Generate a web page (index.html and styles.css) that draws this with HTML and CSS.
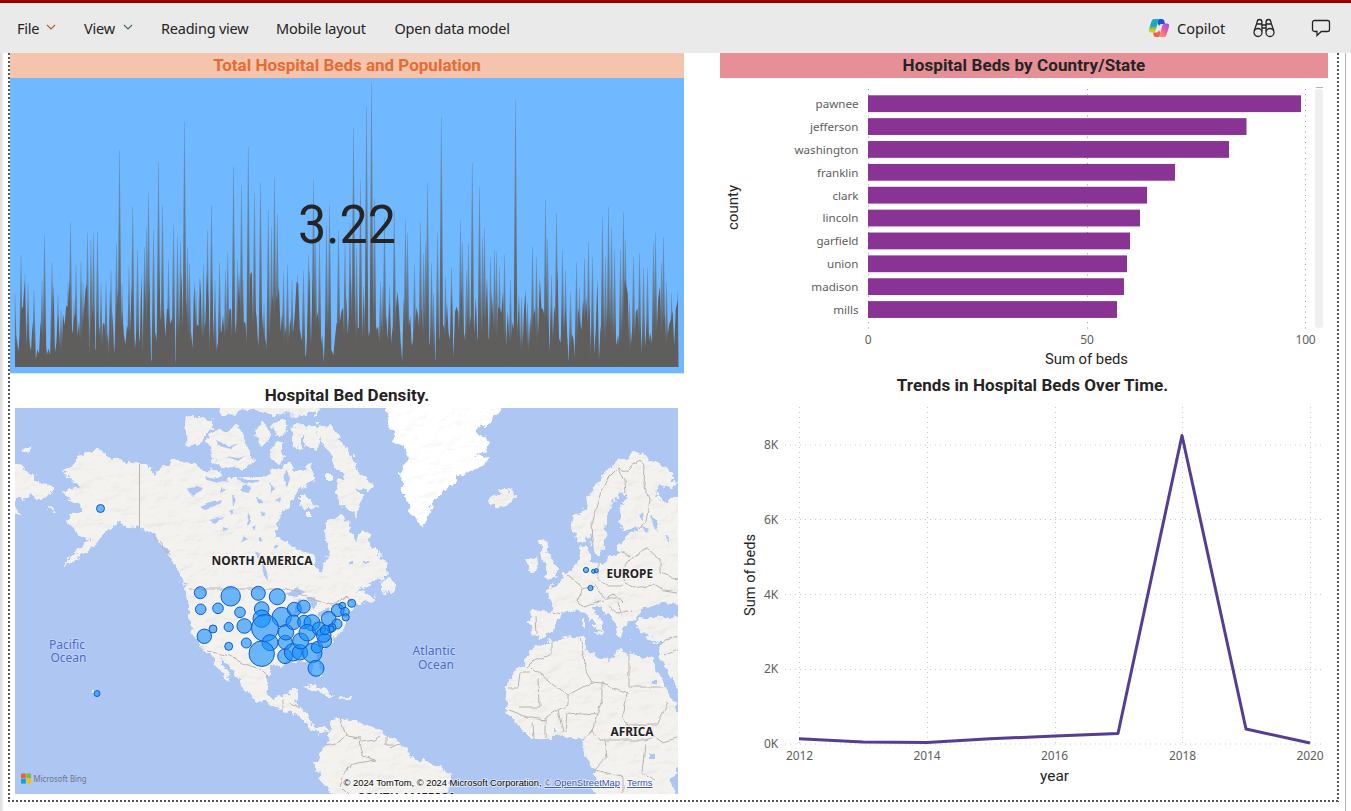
FILE: index.html
```html
<!DOCTYPE html>
<html lang="en">
<head>
<meta charset="utf-8">
<title>Hospital Beds Report</title>
<link rel="stylesheet" href="styles.css">
</head>
<body>
<header class="toolbar">
  <nav class="menu">
    <a class="item file">File <svg class="chev warm" viewBox="0 0 10 6"><path d="M1 1l4 4 4-4"/></svg></a>
    <a class="item view">View <svg class="chev" viewBox="0 0 10 6"><path d="M1 1l4 4 4-4"/></svg></a>
    <a class="item reading">Reading view</a>
    <a class="item mobile">Mobile layout</a>
    <a class="item model">Open data model</a>
  </nav>
  <div class="actions">
    <svg class="copilot" viewBox="0 0 22 20">
      <defs>
        <linearGradient id="cpA" x1="0" y1="0" x2="0" y2="1"><stop offset="0" stop-color="#19a5ec"/><stop offset=".5" stop-color="#22a9a0"/><stop offset=".8" stop-color="#b9cf36"/><stop offset="1" stop-color="#f5bd1f"/></linearGradient>
        <linearGradient id="cpB" x1=".8" y1="0" x2=".2" y2="1"><stop offset="0" stop-color="#9a55f2"/><stop offset=".45" stop-color="#ec5aa0"/><stop offset="1" stop-color="#ff9a52"/></linearGradient>
      </defs>
      <path fill="#1b52d8" d="M8 1h6c1.500 0 2 1 2.400 2.300L17 6h-3.500c-1.500 0-2 1-2.500 2z"/>
      <path fill="url(#cpA)" d="M6 1h6C10.500 1.500 10 4 9.300 6.500L7.800 12c-.5 1.600-1.200 2.500-2.800 2.500H3C.8 14.500.5 12.800 1.200 10.500L3.400 3.600C4 2 4.700 1 6 1z"/>
      <path fill="#f0644f" d="M14 19H8c-1.600 0-2.200-1-2.500-2.300L5 14.500h3.500c1.500 0 2-1 2.500-2.500z"/>
      <path fill="url(#cpB)" d="M16 19h-6c1.500-.5 2-3 2.700-5.500L14.200 8c.5-1.600 1.200-2.500 2.800-2.500h2c2.200 0 2.500 1.700 1.800 4l-2.200 6.900C18 18 17.300 19 16 19z"/>
    </svg>
    <span class="copilot-label">Copilot</span>
    <svg class="binoculars" viewBox="0 0 22 20"><g><circle cx="5" cy="14.500" r="4"/><circle cx="17" cy="14.500" r="4"/><path d="M1.200 13L4.200 4M8.900 13.500V4M13.100 13.500V4M20.800 13l-3-9M4.200 4c0-1.700.8-2.500 2.300-2.500S8.900 2.300 8.900 4M13.100 4c0-1.700.9-2.500 2.400-2.500s2.300.8 2.300 2.500M3.700 6h5M13.300 6h5M8.900 7h4.200M8.900 10h4.200"/></g></svg>
    <svg class="comment" viewBox="0 0 20 18"><path d="M3.500 1.500h13a2 2 0 0 1 2 2v7a2 2 0 0 1-2 2h-6.200L6 16.500v-4H3.500a2 2 0 0 1-2-2v-7a2 2 0 0 1 2-2z"/></svg>
  </div>
</header>
<main class="stage">
 <div class="report">
  <section class="column">
    <h2 class="title peach"><span class="t1">Total Hospital Beds and Population</span></h2>
    <div class="kpi">
      <svg class="fill" viewBox="10 78 674 296"><defs><linearGradient id="fade" x1="0" y1="0" x2="0" y2="1"><stop offset="0" stop-color="#5f5e5c" stop-opacity=".35"/><stop offset=".55" stop-color="#5f5e5c" stop-opacity=".8"/><stop offset=".8" stop-color="#5f5e5c"/></linearGradient></defs><g id="spikes"></g><text class="kpi-value" x="347" y="243" text-anchor="middle" textLength="98" lengthAdjust="spacingAndGlyphs">3.22</text></svg>
    </div>
    <h2 class="title plain"><span class="t2">Hospital Bed Density.</span></h2>
    <svg class="map" viewBox="15 408 663 386">
      <defs>
        <filter id="coast" x="-5%" y="-5%" width="110%" height="110%">
          <feTurbulence type="fractalNoise" baseFrequency=".13" numOctaves="3" seed="4" result="n"/>
          <feDisplacementMap in="SourceGraphic" in2="n" scale="10" xChannelSelector="R" yChannelSelector="G" result="land"/>
          <feTurbulence type="fractalNoise" baseFrequency=".05 .09" numOctaves="4" seed="9" result="h"/>
          <feDiffuseLighting in="h" surfaceScale="1" diffuseConstant="1.085" lighting-color="#fff" result="lit"><feDistantLight azimuth="225" elevation="68"/></feDiffuseLighting>
          <feComposite in="lit" in2="land" operator="in" result="shade"/>
          <feBlend in="land" in2="shade" mode="multiply"/>
        </filter>
        <filter id="rough"><feTurbulence type="fractalNoise" baseFrequency=".1" numOctaves="2" seed="4"/><feDisplacementMap in="SourceGraphic" scale="5" xChannelSelector="R" yChannelSelector="G"/></filter>
      </defs>
      <rect class="sea" x="15" y="408" width="663" height="386"/>
      <g class="land" filter="url(#coast)">
        <path d="M94 450L108 456 126 462 139 464 150 469 155 477 158 470 172 462 178 458 184 463 197 463 205 472 215 470 225 478 237 478 250 477 262 478 272 472 283 466 291 462 293 470 301 470 312 466 314 478 305 485 298 490 293 500 285 508 279 515 276 525 276 536 285 543 293 547 305 552 314 556 318 572 322 575 324 562 330 553 327 543 326 530 327 518 340 516 347 522 350 530 356 540 362 532 368 535 372 545 380 555 389 566 388 575 378 580 365 586 352 592 360 590 365 597 376 597 362 604 356 606 349 614 346 622 340 632 334 640 326 646 320 652 316 656 320 668 322 677 316 676 311 664 305 662 296 660 285 663 278 664 270 668 267 677 267 693 272 697 283 699 290 690 298 690 296 700 297 705 309 710 308 720 315 727 323 726 330 730 322 733 312 729 303 720 296 714 282 709 268 703 252 698 244 690 237 678 228 664 219 655 223 667 232 682 228 680 219 668 212 657 207 651 200 646 195 636 190 628 188 615 188 600 186 588 177 567 170 556 163 545 153 534 140 528 128 525 118 523 107 530 98 542 88 550 75 560 62 567 84 545 92 535 88 538 80 535 73 528 65 520 72 513 80 508 78 503 68 499 61 493 70 488 81 490 78 484 70 477 64 472 72 466 80 455z"/>
        <path d="M10 460L25 470 35 478 43 482 53 490 46 498 38 500 30 494 22 500 10 500zM10 500L22 514 10 516zM20 449l10-1 1 3-8 1zM48 508l6 1 3 3-7-2z"/>
        <path d="M187 417L197 416 210 420 213 428 202 438 196 447 187 443 186 430zM206 440L215 432 230 430 240 425 243 438 255 463 250 468 224 467 210 460 212 450zM255 428L262 422 268 428 270 440 262 447 256 440zM273 422L286 420 288 430 280 437 274 432zM273 445L280 442 283 460 277 463 271 458zM291 428L300 424 305 430 300 448 293 445zM305 426L317 424 319 440 315 450 304 445zM216 404L320 404 318 415 275 414 250 410 222 416z"/>
        <path d="M318 428L328 425 336 434 346 448 352 455 356 470 372 485 368 492 357 486 347 480 338 470 330 450 320 440zM338 480L350 478 356 487 362 497 358 516 350 510 340 503 336 492zM300 494L305 496 317 507 310 508 300 508zM327 474h6v7h-6zM306 512h5v4h-5zM383 580L390 577 396 588 393 594 382 591z"/>
        <path d="M489 496L501 492 513 490 515 498 508 505 496 508 491 503zM540 541L548 543 546 551 553 561 559 571 556 577 543 579 548 572 545 565 543 556zM527 562L537 557 538 567 532 573 527 571z"/>
        <path d="M572 517L585 508 590 497 597 485 605 473 615 463 628 455 642 452 648 460 660 465 672 473 677 483 672 490 658 485 655 490 663 502 670 500 684 490 684 603 672 604 662 602 654 606 646 606 640 612 636 619 628 620 623 628 620 638 614 620 605 612 597 604 591 608 597 616 605 624 602 632 596 626 590 618 583 612 575 610 563 612 557 620 553 632 541 638 532 635 530 624 532 610 551 612 553 604 548 594 545 590 557 582 567 573 577 565 580 558 582 545 588 552 590 563 605 562 619 555 618 548 628 535 640 531 637 528 623 530 619 520 622 507 628 497 623 492 616 498 608 510 607 522 604 540 602 552 597 556 592 545 590 535 583 541 575 537 570 525z"/>
        <path d="M636 621L642 619 658 616 684 618 684 700 678 693 664 664 659 655 661 640 645 637 638 629zM531 650L538 646 548 642 565 638 585 636 586 650 600 658 610 660 618 650 632 654 650 657 655 663 663 682 671 698 677 712 684 712 684 760 676 768 672 780 676 800 597 800 593 785 595 770 583 752 584 742 573 738 562 733 550 738 534 740 520 728 508 715 506 700 507 685 514 672 525 663z"/>
        <path d="M330 722L340 718 352 720 375 728 385 735 401 744 412 757 435 765 450 773 452 782 442 800 334 800 325 785 316 770 316 762 325 745 332 730zM302 686L312 684 325 690 336 696 328 696 315 689zM338 696L352 696 350 700 340 699zM582 619h3v8h-3zM594 632l8-1-2 4zM627 641h8v1h-8zM652 642l6-2-2 3zM92 689l3 2-2 1z"/>
        <path class="ice" d="M385 400L391 425 394 440 404 446 408 460 401 470 402 487 408 505 415 520 425 528 428 517 432 503 440 494 452 486 460 475 478 468 488 459 474 455 488 452 484 435 474 430 490 422 499 412 504 400z"/>
      </g>
      <g class="lakes" filter="url(#rough)">
        <path d="M187 489l10-4 7 2-4 5-8 5zM200 506l12-5 10-1-7 6-10 3zM209 520l14-3-8 6zM232 494l4 6-3 6zM248 512l3 8-4 8zM240 490l6-5 6 3-5 5zM262 560l5 12 1 8-5-7zM255 550l5 4-2 5zM285 594l12-6 10 4-10 4zM297 600l4-1-1 14-5 3zM306 598l8-2 4 8-4 5zM316 613l14-5-2 5-10 3zM331 607l10-4-2 4zM348 562h5v3h-5zM363 561h6v2h-6zM270 482l5 6-3 4zM243 535l4 4-5 4zM651 514l5 7 2 10-5-5zM664 535l5 2-1 6zM638 516l4-4 1 8zM590 534l4 6-3 2zM652 681h6v3h-6zM649 753h6v6h-6zM554 727h2v5h-2zM641 525l8 4-3 4z"/>
        <path d="M204 475l9 3 9-2 7 6-10 1-12-3zM238 478l10 2 12 0-5 4-14-1zM286 470l4 8-3 10-3-8zM222 487l5 3-6 3zM229 512l6-3-3 6zM256 498l7 2-5 3zM252 526l5-2-3 6zM262 512l4 3-5 2zM259 536l4 4-4 3zM217 440l12 6 10-1-8 4-12-3zM225 456l14 2 8-3-9 6zM275 500l7-3-4 6zM222 528l6 2-6 2zM274 545l4 2-4 2z"/>
      </g>
      <g class="borders" filter="url(#rough)">
        <path d="M153 535L170 555M189 589H288L315 600 333 605 347 596 354 605M207 651l23 5 12 7 16 5 10 8M283 700v10M290 704l10 4"/>
        <path d="M593 548L592 520 600 495 608 478 618 468 628 472 632 465 640 460 645 466 644 485 650 500 646 520 639 529M618 468L625 480 626 492M618 552l14 5 8-4 8-4M632 557l-10 14 3 12 9 4M648 549l12 10 0 14 18 6M598 563v17l10 5 14 0M567 575l16 14-6 12M583 589l12-3 10 12 12 0M605 598l10-4 8 9M595 603l8-3M617 602l6 16M609 606l9 8 14-3M536 616l1 18M552 612l10 2M577 601l8 5 10-4M634 587l20-3 10 6 14 2"/>
        <path d="M552 642V653L532 662 526 668M532 668L545 678 568 695 592 682 585 670 584 653 580 637M507 688H518L520 673H530M538 678L539 707H518M568 695V705L558 710 543 720M592 682L602 683V698L597 715 567 713 565 733M602 683L627 693 623 718 628 725H657L668 703M629 655V687H663M597 715L592 730 583 740M592 730L600 740H645L655 737M532 722L533 740M546 720V738M558 710L563 733M605 740L607 757 595 770M645 745L642 773 655 780M595 770L622 777V794M655 737L662 742 678 738M509 710l22 8 15 2M661 642L678 636M665 655L678 650"/>
        <path d="M340 718l6 18 14 2 2 18 14 4M362 742l12-2 6-4M346 736l-10 8-12 2M376 760l-24 4-8 10-4 12 8 8M387 737v8h8M390 748l10-4"/>
      </g>
      <path class="borders" d="M139.500 464V527"/>
      <g class="bubbles" id="bubbles"></g>
      <g class="maplabels">
        <text class="cont" x="211.500" y="565" textLength="101" lengthAdjust="spacingAndGlyphs">NORTH AMERICA</text>
        <text class="cont" x="606.500" y="577.500" textLength="46.500" lengthAdjust="spacingAndGlyphs">EUROPE</text>
        <text class="cont" x="610.500" y="735.500" textLength="43" lengthAdjust="spacingAndGlyphs">AFRICA</text>
        <text class="cont" x="358" y="802" textLength="98" lengthAdjust="spacingAndGlyphs">SOUTH AMERICA</text>
        <text class="ocean" x="49" y="648.500" textLength="36" lengthAdjust="spacingAndGlyphs">Pacific</text>
        <text class="ocean" x="50.500" y="662" textLength="36" lengthAdjust="spacingAndGlyphs">Ocean</text>
        <text class="ocean" x="412.500" y="654.500" textLength="43" lengthAdjust="spacingAndGlyphs">Atlantic</text>
        <text class="ocean" x="418" y="668.500" textLength="36" lengthAdjust="spacingAndGlyphs">Ocean</text>
      </g>
      <rect x="21" y="773.500" width="4.800" height="4.800" fill="#f0622d"/><rect x="26.300" y="773.500" width="4.800" height="4.800" fill="#80bb3c"/>
      <rect x="21" y="778.800" width="4.800" height="4.800" fill="#00a4ef"/><rect x="26.300" y="778.800" width="4.800" height="4.800" fill="#fbb917"/>
      <text class="bing" x="33.500" y="782" textLength="53" lengthAdjust="spacingAndGlyphs">Microsoft Bing</text>
      <g class="credits">
        <text x="343.500" y="786" textLength="198" lengthAdjust="spacingAndGlyphs">© 2024 TomTom, © 2024 Microsoft Corporation,</text>
        <text class="link" x="544.500" y="786" textLength="75.500" lengthAdjust="spacingAndGlyphs">© OpenStreetMap</text>
        <text class="link" x="627" y="786" textLength="25.500" lengthAdjust="spacingAndGlyphs">Terms</text>
      </g>
    </svg>
  </section>
  <section class="column">
    <h2 class="title rose"><span class="t3">Hospital Beds by Country/State</span></h2>
    <svg class="barchart" viewBox="720 78 608 292">
      <g class="vgrid"><path d="M868.500 89V330M1087.500 89V330M1305.500 89V330"/></g>
      <g id="bars"></g>
      <rect x="1315" y="89" width="8" height="239" rx="3" fill="#f0f0f0"/><path d="M1316 87.500h7" stroke="#b5b5b5"/>
      <g class="ticks" text-anchor="middle"><text x="868" y="344">0</text><text x="1087" y="344">50</text><text x="1305.500" y="344">100</text></g>
      <text class="axis" x="1045" y="364" textLength="83" lengthAdjust="spacingAndGlyphs">Sum of beds</text>
      <text class="axis" transform="translate(738 230) rotate(-90)" textLength="45" lengthAdjust="spacingAndGlyphs">county</text>
    </svg>
    <h2 class="title trend"><span class="t4">Trends in Hospital Beds Over Time.</span></h2>
    <svg class="linechart" viewBox="720 400 608 394">
      <g class="grid"><path d="M785 445H1323M785 519.500H1323M785 594.500H1323M785 669.500H1323M785 744H1323M799.500 407V744M927.500 407V744M1055.500 407V744M1182.500 407V744M1310.500 407V744"/></g>
      <path class="trendline" d="M799 738.800L863 742 927 742.500 990 738.800 1055 736 1118 733.500 1182 435.500 1246 729 1310 743"/>
      <g class="ticks" text-anchor="end"><text x="778" y="449">8K</text><text x="778" y="524">6K</text><text x="778" y="599">4K</text><text x="778" y="673">2K</text><text x="778" y="748">0K</text></g>
      <g class="ticks" text-anchor="middle"><text x="799.500" y="760">2012</text><text x="927" y="760">2014</text><text x="1054.500" y="760">2016</text><text x="1182.500" y="760">2018</text><text x="1310" y="760">2020</text></g>
      <text class="axis" x="1040" y="781" textLength="29" lengthAdjust="spacingAndGlyphs">year</text>
      <text class="axis" transform="translate(754.500 616) rotate(-90)" textLength="82" lengthAdjust="spacingAndGlyphs">Sum of beds</text>
    </svg>
  </section>
 </div>
</main>
<script src="charts.js"></script>
</body>
</html>
```
FILE: styles.css
```css
* { box-sizing: border-box; }
body { margin: 0; width: 1351px; height: 811px; overflow: hidden; background: #fff; font-family: "Noto Sans", "Open Sans", sans-serif; color: #252423; }
svg { display: block; }
.toolbar { height: 53px; border-top: 3px solid #990000; background: #eaeaea; display: flex; justify-content: space-between; align-items: center; padding: 0 20px 0 17px; }
.menu { display: flex; align-items: center; gap: 28px; color: #252423; }
.item { display: flex; align-items: center; white-space: nowrap; height: 24px; font-size: 14.5px; letter-spacing: -.22px; }
.file { width: 39px; justify-content: space-between; }
.view { width: 49px; justify-content: space-between; }
.reading { width: 87px; }
.mobile { width: 90.500px; }
.model { width: 116px; }
.chev { width: 10px; height: 6px; fill: none; stroke: #3f6b55; stroke-width: 1.1; margin-top: -2px; }
.chev.warm { stroke: #a3602c; }
.actions { display: flex; align-items: center; }
.copilot { width: 22px; height: 20px; }
.copilot-label { width: 49px; margin-left: 7px; font-size: 14.5px; white-space: nowrap; }
.binoculars { width: 22px; height: 20px; margin-left: 27px; fill: none; stroke: #252423; stroke-width: 1.3; }
.comment { width: 20px; height: 18px; margin-left: 36px; fill: none; stroke: #252423; stroke-width: 1.3; }
.stage { height: 758px; padding-left: 8px; padding-right: 12px; background: linear-gradient(90deg, #dcdcdc 0, #eee 3px, #fff 3px, #fff 1345px, #b5b5b5 1345px, #b5b5b5 1346px, #fff 1346px); }
.report { height: 749px; width: 1331px; padding-left: 2px; display: grid; grid-template-columns: 674px 608px; column-gap: 36px;
  background:
    linear-gradient(180deg, #555 50%, transparent 50%) left top / 2px 4px repeat-y,
    linear-gradient(180deg, #555 50%, transparent 50%) right top / 2px 4px repeat-y,
    linear-gradient(90deg, #555 50%, transparent 50%) left bottom / 4px 2px repeat-x; }
.column { display: flex; flex-direction: column; }
.title { margin: 0; text-align: center; font: 700 17px/24px Roboto, "Open Sans", sans-serif; white-space: nowrap; flex: none; }
.t2 { letter-spacing: .08px; }
.t3 { letter-spacing: .1px; }
.t4 { letter-spacing: .06px; }
.peach { height: 25px; background: #f4c4ad; color: #e66c37; }
.rose { height: 25px; background: #e68f96; }
.plain { height: 34px; padding-top: 9px; }
.trend { height: 27px; margin-top: 3px; padding-left: 17px; }
.kpi { height: 296px; background: #70b8ff; border-bottom: 1px solid #d4e9ff; flex: none; }
.fill { width: 674px; height: 296px; }
.base { fill: #5f5e5c; }
.spike { fill: url(#fade); }
.kpi-value { font: 400 54px "Roboto", sans-serif; fill: #252423; }
.map { width: 663px; height: 386px; margin-left: 5px; flex: none; }
.sea { fill: #adc7f2; }
.land { fill: #f3f2ef; }
.ice { fill: #fff; }
.lakes { fill: #adc7f2; }
.borders { fill: none; stroke: #b9b4b0; stroke-width: 1; }
.bubbles { fill: #118dff; fill-opacity: .6; stroke: #0e5ccc; stroke-width: 1; }
.cont { font: 700 12.5px "Noto Sans", sans-serif; fill: #222; paint-order: stroke; stroke: #fff; stroke-width: 1.5px; stroke-opacity: .6; }
.ocean { font: 400 12px "Noto Sans", sans-serif; fill: #4a68c8; paint-order: stroke; stroke: #c3d6f7; stroke-width: 1.5px; }
.bing { font: 400 9.5px "Noto Sans", sans-serif; fill: #6e7683; }
.credits { font: 400 9.5px "Liberation Sans", sans-serif; fill: #000; paint-order: stroke; stroke: #fff; stroke-width: 1.5px; stroke-opacity: .7; }
.link { fill: #3553b5; text-decoration: underline; }
.barchart { width: 608px; height: 292px; flex: none; }
.linechart { width: 608px; height: 394px; flex: none; }
.vgrid { fill: none; stroke: #a988b2; stroke-width: 1; stroke-dasharray: 1 4.3; }
.grid { fill: none; stroke: #cacaca; stroke-width: 1; stroke-dasharray: 1 4; }
.ticks { font: 400 12px "Noto Sans", sans-serif; fill: #605e5c; letter-spacing: -.15px; }
.cat { font: 400 11.6px "Noto Sans", sans-serif; fill: #605e5c; }
.bar { fill: #893395; }
.axis { font: 400 14.5px Roboto, sans-serif; fill: #252423; }
.trendline { fill: none; stroke: #563d94; stroke-width: 3; stroke-linejoin: round; }
```
FILE: charts.js
```js
const NS = 'http://www.w3.org/2000/svg';
function add(parent, tag, attrs, text) {
  const el = document.createElementNS(NS, tag);
  for (const k in attrs) el.setAttribute(k, attrs[k]);
  if (text) el.textContent = text;
  document.getElementById(parent).appendChild(el);
}

// KPI trend: tall readings over a dense base series
const peaks = [15,293,21,255,25,274,28,283,34,290,42,281,44.5,235,52,262,58,295,61,310,68,282,70.5,222,74,300,76,265,81,261,83,282,87.5,233,91,240,93.5,233,97.5,232,101,283,106,281,110,292,111,270,116.5,243,119.5,150,122,283,129,267,132.7,207,137.5,250,144.5,247,146.5,227,148.5,193,153.5,230,158.5,162,162.5,205,168.5,260,173.5,225,177.5,237,180.5,242,184.5,122,187.5,247,189.5,263,196,290,199.5,278,203.5,265,207.5,230,211.5,205,215,280,219.5,262,225.5,270,227.7,252,233.5,167,237.5,260,241.5,185,243,280,248.3,147,254.5,193,260.5,182,264,303,268.3,210,271.5,227,274.5,178,277.3,214,283.5,273,287.5,265,292,280,297.5,275,303.5,270,308.5,255,313.5,180,315.5,237,319.5,240,326.5,225,329.5,205,338.5,230,345,242,350,223,353.5,128,356.5,248,360.5,180,363.5,287,366.5,107,371.5,83,374.5,198,380.5,282,382.5,287,384.5,217,389.5,285,394.3,210,405.5,220,407.5,233,414.5,265,420.5,223,423.5,253,425.5,243,427.5,183,431.5,263,433.5,293,437.5,233,441.3,117,445.5,277,451.5,267,460.5,220,462.5,242,466.5,270,468.5,243,472.3,163,479.5,187,482.5,237,484.5,228,490.5,257,494.5,250,496.5,252,499.5,267,504.5,255,510.5,280,515.5,100,521.5,298,527.5,303,532.5,247,536.5,257,540.5,318,545.5,200,547.5,238,551.5,275,556.5,213,562.5,250,565.5,270,570.5,292,576.5,262,579.5,287,584.5,258,588.5,242,592.5,257,602.5,217,605.5,257,608.5,207,611.5,228,614.5,250,620.5,250,623.5,212,625.5,240,629.5,300,633.5,257,639.5,253,643.5,268,647.5,268,653.5,243,655.5,233,661.5,263,663.5,237,666.5,282,671.5,293,677.5,292];
for (let i = 0; i < peaks.length; i += 2) {
  const x = peaks[i], y = peaks[i + 1];
  add('spikes', 'path', { class: 'spike', d: `M${Math.max(15, x - 2)} 367L${x - .3} ${y}H${x + .3}L${Math.min(678.5, x + 2)} 367z` });
}
let seed = 77;
const rnd = () => (seed = (seed * 16807) % 2147483647) / 2147483647;
let base = 'M15 367';
for (let x = 15; x <= 677; x += 1.6) {
  const r = rnd();
  const h = r < .17 ? 2 + rnd() * 16 : r > .86 ? 60 + rnd() * 40 : 18 + rnd() * 42;
  base += `L${x.toFixed(1)} ${(367 - h).toFixed(1)}`;
}
add('spikes', 'path', { class: 'base', d: base + 'L678 300V367z' });

// Counties
[['pawnee', 1301], ['jefferson', 1246.5], ['washington', 1229], ['franklin', 1175], ['clark', 1147], ['lincoln', 1140], ['garfield', 1130], ['union', 1127], ['madison', 1124], ['mills', 1117]].forEach(([name, end], i) => {
  const y = 95.3 + i * 22.87;
  add('bars', 'rect', { class: 'bar', x: 868, y, width: end - 868, height: 16.8 });
  add('bars', 'text', { class: 'cat', x: 858.5, y: y + 12.8, 'text-anchor': 'end' }, name);
});

// Bed density by location: x, y, radius
[[200.3,592.7,6],[230.7,596.3,9.7],[258.3,593.3,7],[277.3,596.7,8],[200.7,609.3,5.3],[218,608.3,5.3],[240,612.3,5.3],[261.7,609,7.3],[261.7,618.7,8.7],[281.7,617,9.7],[294.3,609.3,7],[303.7,606.7,6.5],[265,628,13.5],[244.3,626,7.3],[228.7,627,4.6],[213,629,4],[204.3,636.3,7.2],[228.7,646.3,4],[246.3,643,5],[270,642.7,8],[261.7,653.7,12.7],[285.3,642.3,7],[286,632.3,7.7],[293.3,622.3,7.3],[304.3,622,6.7],[312,622.7,8],[285,656.3,7.3],[293,652.3,8.7],[300,652.3,7.7],[312.3,653,9.7],[317,647.3,5.7],[316,668.3,8],[300.7,641,8],[307.3,632.7,8.3],[319,628.7,6.7],[324.7,640.7,7],[323.7,635,7.3],[328.7,618.7,7.3],[337.7,610.3,6.3],[342.3,605.7,3.4],[345,611.7,4.3],[345.7,617.3,3.6],[351.7,603.3,4],[337,624,5],[332,627.7,4],[330.7,629.3,3.3],[325,630,4.7],[100.5,508.5,4],[97,693.5,3],[586,570,2.6],[593.5,571.3,2],[596.3,570.6,2],[590.5,588,2.6]].forEach(([cx, cy, r]) => add('bubbles', 'circle', { cx, cy, r }));
```
